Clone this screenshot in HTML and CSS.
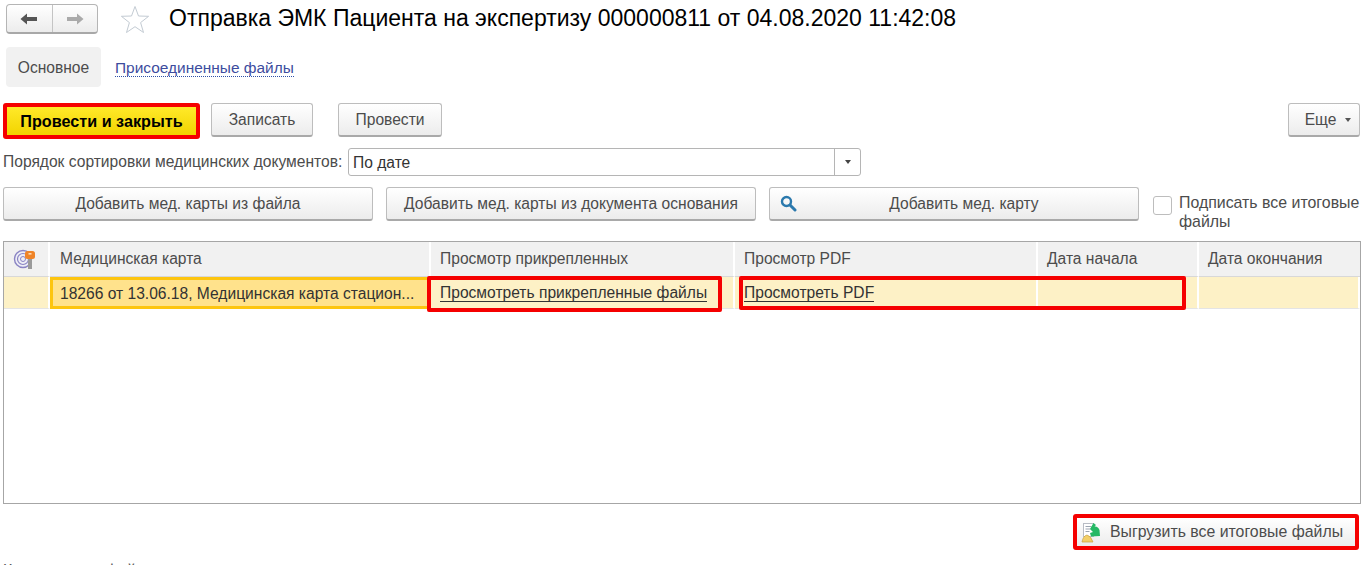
FILE: index.html
```html
<!DOCTYPE html>
<html lang="ru">
<head>
<meta charset="utf-8">
<title>Отправка ЭМК</title>
<link rel="stylesheet" href="styles.css">
</head>
<body>
<div class="page">
  <header class="head">
    <div class="nav">
      <button class="nav-btn" aria-label="Назад"><svg width="18" height="14" viewBox="0 0 18 14"><path d="M0.5 7 L7 1.5 V5 H17 V9 H7 V12.5 Z" fill="#555"/></svg></button>
      <button class="nav-btn" aria-label="Вперед"><svg width="18" height="14" viewBox="0 0 18 14"><path d="M17.5 7 L11 1.5 V5 H1 V9 H11 V12.5 Z" fill="#aaa"/></svg></button>
    </div>
    <svg class="star" width="30" height="29" viewBox="0 0 30 29"><path d="M15 1.5 L18.5 11 L28.6 11.3 L20.6 17.6 L23.5 27.5 L15 21.7 L6.5 27.5 L9.4 17.6 L1.4 11.3 L11.5 11 Z" fill="#fff" stroke="#c3cbd3" stroke-width="1"/></svg>
    <h1 class="title">Отправка ЭМК Пациента на экспертизу 000000811 от 04.08.2020 11:42:08</h1>
  </header>

  <nav class="tabs">
    <span class="tab">Основное</span>
    <a class="tab-link">Присоединенные файлы</a>
  </nav>

  <div class="commands">
    <button class="btn primary">Провести и закрыть</button>
    <button class="btn save">Записать</button>
    <button class="btn post">Провести</button>
    <button class="btn more">Еще<i class="caret"></i></button>
  </div>

  <div class="sort">
    <label class="sort-label">Порядок сортировки медицинских документов:</label>
    <div class="select"><span class="select-value">По дате</span><span class="select-drop"><i class="caret dark"></i></span></div>
  </div>

  <div class="adds">
    <button class="btn add">Добавить мед. карты из файла</button>
    <button class="btn add">Добавить мед. карты из документа основания</button>
    <button class="btn add search">
      <svg class="search-icon" width="17" height="17" viewBox="0 0 17 17"><circle cx="6.5" cy="6.5" r="4.5" fill="none" stroke="#2b79ad" stroke-width="2.4"/><path d="M10 10 L15 15" stroke="#2b79ad" stroke-width="3" stroke-linecap="round"/></svg>
      Добавить мед. карту
    </button>
    <div class="check"><span class="box"></span><span class="check-text">Подписать все итоговые файлы</span></div>
  </div>

  <div class="table">
    <div class="hcell">
      <svg width="24" height="22" viewBox="0 0 24 22">
        <circle cx="10" cy="11" r="8.5" fill="#eeeef6" stroke="#8a84c4" stroke-width="1.4"/>
        <circle cx="10" cy="11" r="5.5" fill="none" stroke="#8a84c4" stroke-width="1.2"/>
        <circle cx="10" cy="11" r="2.5" fill="none" stroke="#8a84c4" stroke-width="1"/>
        <rect x="15" y="10" width="4" height="11" fill="#9a9a9a"/>
        <rect x="12" y="3" width="10" height="8" rx="2.5" fill="#ef8428"/>
        <rect x="15.5" y="5" width="3" height="1.6" fill="#ffd9b0"/>
      </svg>
    </div>
    <div class="hcell">Медицинская карта</div>
    <div class="hcell">Просмотр прикрепленных</div>
    <div class="hcell">Просмотр PDF</div>
    <div class="hcell">Дата начала</div>
    <div class="hcell">Дата окончания</div>

    <div class="cell"></div>
    <div class="cell current">18266 от 13.06.18, Медицинская карта стацион...</div>
    <div class="cell"><a class="cell-link">Просмотреть прикрепленные файлы</a></div>
    <div class="cell"><a class="cell-link">Просмотреть PDF</a></div>
    <div class="cell"></div>
    <div class="cell"></div>

    <div class="mark mark-files"></div>
    <div class="mark mark-pdf"></div>
  </div>

  <div class="export-row">
    <button class="btn export">
      <svg width="20" height="21" viewBox="0 0 20 21">
        <rect x="2.5" y="1.5" width="10" height="13" fill="#fff" stroke="#b8bcc4"/>
        <path d="M4.5 4.5h6M4.5 7h5M4.5 9.5h4" stroke="#9aa3b0"/>
        <path d="M12.5 1 L15 3 L13.5 4.5 Q17 4 18.5 8 L19 14 L10 14.5 L9 11 L12 10 L9 7 Z" fill="#25b864"/>
        <path d="M1 20 Q2 14 6 13 Q10 14 12 20 Z" fill="#f2cf68" stroke="#c9a240" stroke-width=".7"/>
      </svg>
      <span>Выгрузить все итоговые файлы</span>
    </button>
  </div>

  <div class="clipped">Комментарии файлов</div>
</div>
</body>
</html>
```

FILE: styles.css
```css
* { box-sizing: border-box; }
html, body { margin: 0; height: 100%; overflow: hidden; background: #fff; }
body { font-family: "Liberation Sans", Arial, sans-serif; font-size: 15.6px; color: #4c4c4c; }
button { font: inherit; color: inherit; cursor: default; }
.page { display: flex; flex-direction: column; height: 565px; overflow: hidden; padding-top: 4px; }
.page > * { flex: none; }

.head { display: flex; align-items: center; height: 30px; padding-left: 6px; }
.nav { display: flex; width: 92px; height: 30px; border: 1px solid #b5b5b5; border-bottom: 2px solid #a8a8a8; border-radius: 4px; background: linear-gradient(#fff, #ececec); overflow: hidden; }
.nav-btn { flex: 1; border: 0; padding: 0; background: none; display: flex; align-items: center; justify-content: center; }
.nav-btn + .nav-btn { border-left: 1px solid #c4c4c4; }
.star { margin-left: 22px; }
.title { margin: 0 0 0 19px; font-size: 23px; font-weight: 400; color: #000; white-space: nowrap; line-height: 30px; position: relative; top: -1px; }

.tabs { display: flex; align-items: center; height: 40px; margin-top: 13px; padding-left: 6px; }
.tab { display: flex; align-items: center; justify-content: center; width: 95px; height: 40px; padding-top: 1px; background: #f1f1f1; border-radius: 4px; }
.tab-link { margin: 2px 0 0 14px; color: #3d4c9e; border-bottom: 1px dotted #2d4fa8; line-height: 16px; font-size: 15.45px; }

.commands { display: flex; align-items: flex-start; height: 36px; margin-top: 16px; padding: 0 9px 0 3px; }
.btn { display: flex; align-items: center; justify-content: center; border: 1px solid #bdbdbd; border-bottom: 2px solid #a9a9a9; border-radius: 3px; background: linear-gradient(#fff, #ececec); padding: 0; white-space: nowrap; }
.primary { width: 197px; height: 36px; border: 4px solid #f50000; border-radius: 3px; background: linear-gradient(#ffe92a, #f2d400); color: #000; font-weight: 700; font-size: 16.2px; }
.save { width: 102px; height: 34px; margin-left: 11px; }
.post { width: 104px; height: 34px; margin-left: 25px; }
.more { width: 72px; height: 34px; margin-left: auto; padding-left: 8px; gap: 9px; }
.caret { display: inline-block; width: 0; height: 0; border: 3.5px solid transparent; border-top: 4px solid #555; border-bottom: 0; }
.caret.dark { border-top-color: #444; }

.sort { display: flex; align-items: center; height: 28px; margin-top: 9px; padding-left: 3px; }
.sort-label { width: 345px; white-space: nowrap; }
.select { display: flex; width: 513px; height: 28px; border: 1px solid #b5b5b5; border-radius: 3px; align-items: center; }
.select-value { flex: 1; padding: 1px 0 0 4px; color: #333; }
.select-drop { display: flex; width: 26px; height: 100%; border-left: 1px solid #b5b5b5; align-items: center; justify-content: center; }

.adds { display: flex; align-items: flex-start; height: 44px; margin-top: 11px; padding-left: 3px; }
.add { width: 370px; height: 34px; margin-right: 13px; }
.search { position: relative; margin-right: 0; padding-left: 20px; }
.search-icon { position: absolute; left: 10px; top: 7px; }
.check { display: flex; margin-left: 14px; margin-top: 6px; }
.box { flex: none; width: 19px; height: 19px; margin-top: 3px; border: 1px solid #bdbdbd; border-radius: 3px; background: #fff; }
.check-text { width: 186px; margin-left: 7px; line-height: 19px; font-size: 15.9px; }

.table { position: relative; display: grid; grid-template-columns: 46px 381px 304px 303px 161px 1fr; grid-template-rows: 35px 32px; align-content: start; width: 1358px; height: 263px; margin: 10px 0 0 3px; border: 1px solid #a6a6a6; }
.hcell { display: flex; align-items: center; padding-left: 9px; background: #f1f1f1; border-right: 2px solid #fff; border-bottom: 1px solid #d8d8d8; }
.hcell:nth-child(2) { padding-left: 10px; }
.hcell:nth-child(6) { border-right: 0; }
.cell { display: flex; align-items: center; padding: 2px 0 0 9px; background: #fdf1c6; border-right: 2px solid #fff; border-bottom: 1px solid #e4e4e4; color: #333; white-space: nowrap; }
.current { background: #ffe28c; border: 3px solid #fdc50f; padding: 1px 0 0 7px; }
.cell-link { color: #333; border-bottom: 1px solid #333; line-height: 16px; }
.mark { position: absolute; border: 4px solid #f50000; border-radius: 2px; pointer-events: none; }
.mark-files { left: 423px; top: 34px; width: 295px; height: 36px; }
.mark-pdf { left: 735px; top: 34px; width: 447px; height: 34px; }

.export-row { display: flex; justify-content: flex-end; margin-top: 10px; padding-right: 10px; }
.export { width: 286px; height: 36px; border: 4px solid #f50000; border-radius: 3px; gap: 9px; justify-content: flex-start; padding-left: 4px; font-size: 15.85px; }
.clipped { margin-top: 12px; padding-left: 3px; white-space: nowrap; color: #555; }
```
